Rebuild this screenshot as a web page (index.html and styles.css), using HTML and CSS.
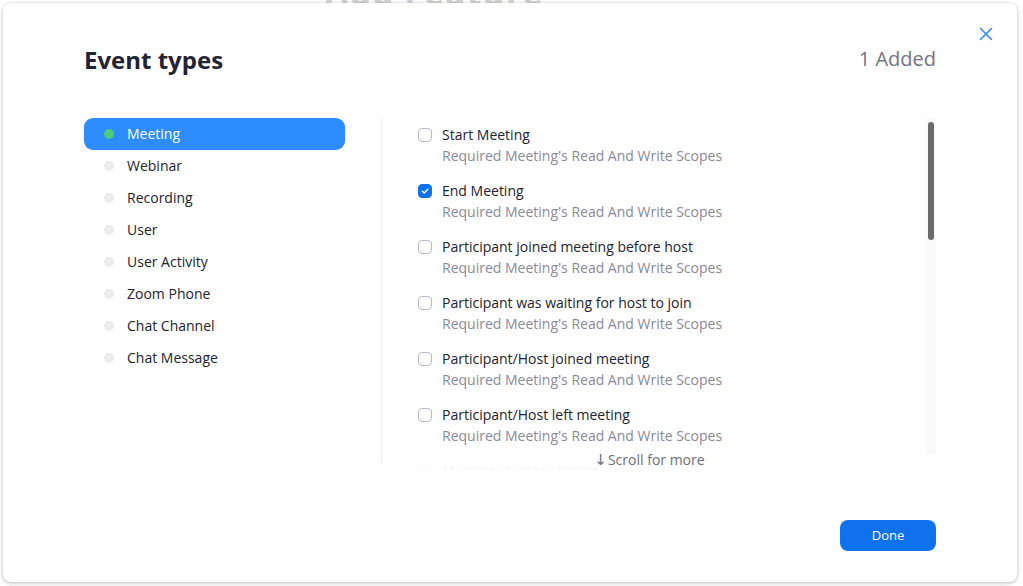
FILE: index.html
```html
<!DOCTYPE html>
<html lang="en">
<head>
<meta charset="utf-8">
<title>Event types</title>
<link rel="stylesheet" href="styles.css">
</head>
<body>
<div class="backdrop">
  <div class="behind-title">Add Feature</div>
</div>
<div class="modal">
  <button class="close" aria-label="Close">
    <svg width="14" height="14" viewBox="0 0 14 14"><path d="M1.5 1.5 L12.5 12.5 M12.5 1.5 L1.5 12.5" stroke="#2D8CFF" stroke-width="1.6" fill="none" stroke-linecap="round"/></svg>
  </button>
  <div class="header">
    <h1 class="title">Event types</h1>
    <div class="added">1 Added</div>
  </div>
  <div class="body">
    <ul class="nav">
      <li class="nav-item active"><span class="dot"></span>Meeting</li>
      <li class="nav-item"><span class="dot"></span>Webinar</li>
      <li class="nav-item"><span class="dot"></span>Recording</li>
      <li class="nav-item"><span class="dot"></span>User</li>
      <li class="nav-item"><span class="dot"></span>User Activity</li>
      <li class="nav-item"><span class="dot"></span>Zoom Phone</li>
      <li class="nav-item"><span class="dot"></span>Chat Channel</li>
      <li class="nav-item"><span class="dot"></span>Chat Message</li>
    </ul>
    <div class="divider"></div>
    <div class="events">
      <div class="list">
        <div class="event">
          <span class="check"></span>
          <div class="texts"><div class="ev-title">Start Meeting</div><div class="ev-sub">Required Meeting's Read And Write Scopes</div></div>
        </div>
        <div class="event">
          <span class="check checked"><svg width="10" height="10" viewBox="0 0 10 10"><path d="M2.3 5.2 L4.2 7 L7.8 3.3" stroke="#fff" stroke-width="1.4" fill="none" stroke-linecap="round" stroke-linejoin="round"/></svg></span>
          <div class="texts"><div class="ev-title">End Meeting</div><div class="ev-sub">Required Meeting's Read And Write Scopes</div></div>
        </div>
        <div class="event">
          <span class="check"></span>
          <div class="texts"><div class="ev-title">Participant joined meeting before host</div><div class="ev-sub">Required Meeting's Read And Write Scopes</div></div>
        </div>
        <div class="event">
          <span class="check"></span>
          <div class="texts"><div class="ev-title">Participant was waiting for host to join</div><div class="ev-sub">Required Meeting's Read And Write Scopes</div></div>
        </div>
        <div class="event">
          <span class="check"></span>
          <div class="texts"><div class="ev-title">Participant/Host joined meeting</div><div class="ev-sub">Required Meeting's Read And Write Scopes</div></div>
        </div>
        <div class="event">
          <span class="check"></span>
          <div class="texts"><div class="ev-title">Participant/Host left meeting</div><div class="ev-sub">Required Meeting's Read And Write Scopes</div></div>
        </div>
        <div class="event">
          <span class="check"></span>
          <div class="texts"><div class="ev-title">Meeting sharing started</div><div class="ev-sub">Required Meeting's Read And Write Scopes</div></div>
        </div>
        <div class="fade"><span class="scroll-more"><span class="arrow">↓</span>Scroll for more</span></div>
      </div>
      <div class="track"><div class="thumb"></div></div>
    </div>
  </div>
  <div class="footer">
    <button class="done">Done</button>
  </div>
</div>
</body>
</html>
```

FILE: styles.css
```css
* { box-sizing: border-box; }
html, body { margin: 0; padding: 0; }
body {
  width: 1023px;
  height: 586px;
  background: #ffffff;
  font-family: "Open Sans", "Noto Sans", sans-serif;
  overflow: hidden;
  position: relative;
}
.backdrop {
  display: flex;
  padding-left: 325px;
}
.behind-title {
  margin-top: -31px;
  font-size: 34px;
  font-weight: 700;
  color: #d2d2d6;
  letter-spacing: 1px;
}
.modal {
  position: absolute;
  left: 3px;
  top: 3px;
  width: 1014px;
  height: 579px;
  background: #fff;
  border-radius: 8px;
  box-shadow: 0 1px 4px rgba(0, 0, 0, 0.28);
  padding: 41px 81px 31px 81px;
  display: flex;
  flex-direction: column;
}
.close {
  position: absolute;
  right: 24px;
  top: 24px;
  width: 14px;
  height: 14px;
  padding: 0;
  border: 0;
  background: none;
  display: flex;
}
.header {
  display: flex;
  justify-content: space-between;
  align-items: center;
  height: 32px;
}
.title {
  margin: 0;
  font-size: 24px;
  line-height: 32px;
  font-weight: 700;
  color: #232333;
}
.added {
  font-size: 20px;
  color: #747487;
  margin-top: -4px;
}
.body {
  display: flex;
  margin-top: 42px;
  height: 352px;
}
.nav {
  list-style: none;
  margin: 0;
  padding: 0;
  width: 261px;
  flex: none;
}
.nav-item {
  height: 32px;
  display: flex;
  align-items: center;
  padding-left: 20px;
  padding-bottom: 2px;
  font-size: 14px;
  color: #232333;
  border-radius: 9px;
}
.nav-item .dot {
  width: 10px;
  height: 10px;
  border-radius: 50%;
  background: #ebebf0;
  margin-right: 13px;
  margin-top: 2px;
  flex: none;
}
.nav-item.active {
  background: #2D8CFF;
  color: #fff;
}
.nav-item.active .dot { background: #4bce7a; }
.divider {
  width: 1px;
  background: #ececf1;
  margin-left: 36px;
  margin-bottom: 8px;
  flex: none;
}
.events {
  flex: 1;
  display: flex;
  min-width: 0;
}
.list {
  flex: 1;
  position: relative;
  overflow: hidden;
  padding: 6px 0 0 36px;
  height: 352px;
}
.event {
  display: flex;
  align-items: flex-start;
  margin-bottom: 14px;
}
.check {
  width: 14px;
  height: 14px;
  border: 1px solid #babacc;
  border-radius: 4px;
  margin-top: 4px;
  margin-right: 10px;
  flex: none;
  display: flex;
  align-items: center;
  justify-content: center;
  background: #fff;
}
.check.checked {
  background: #0E72ED;
  border-color: #0E72ED;
}
.ev-title {
  font-size: 14px;
  line-height: 21px;
  color: #232333;
}
.ev-sub {
  font-size: 14px;
  line-height: 21px;
  color: #8a8a9c;
}
.fade {
  position: absolute;
  left: 0;
  right: 0;
  bottom: 0;
  height: 24px;
  background: linear-gradient(to bottom, rgba(255,255,255,0.88), rgba(255,255,255,0.96));
  display: flex;
  justify-content: center;
  align-items: flex-start;
  padding-right: 8px;
}
.scroll-more {
  font-size: 14px;
  line-height: 20px;
  color: #6e6e7e;
  margin-top: 4px;
  display: flex;
  align-items: center;
}
.arrow {
  font-family: "DejaVu Sans", sans-serif;
  font-size: 15px;
  margin-right: 1px;
}
.track {
  width: 11px;
  height: 337px;
  background: #fafafa;
  flex: none;
  padding: 4px 2px 0 2px;
}
.thumb {
  width: 6px;
  height: 118px;
  background: #6b6b6b;
  border-radius: 3px;
  margin-left: 1px;
}
.footer {
  margin-top: auto;
  display: flex;
  justify-content: flex-end;
}
.done {
  width: 96px;
  height: 31px;
  border: 0;
  border-radius: 8px;
  background: #0E72ED;
  color: #fff;
  font-family: "Open Sans", "Noto Sans", sans-serif;
  font-size: 13px;
  padding-bottom: 2px;
}
```
